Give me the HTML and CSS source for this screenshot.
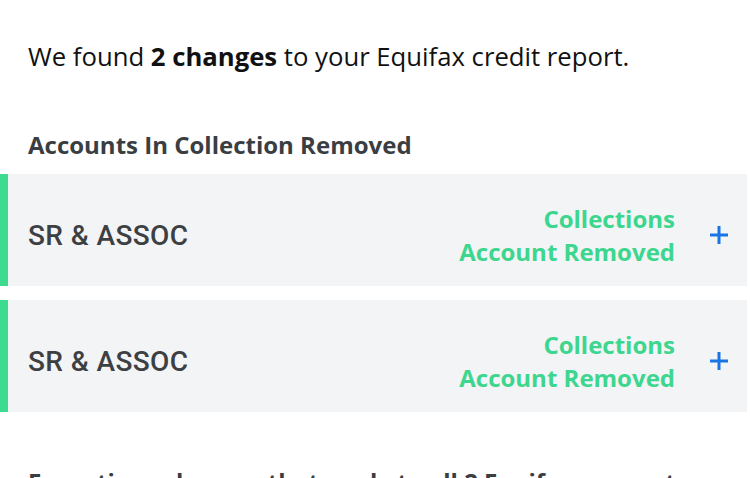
FILE: index.html
```html
<!DOCTYPE html>
<html>
<head>
<meta charset="utf-8">
<link rel="stylesheet" href="styles.css">
</head>
<body>
<main class="page">
  <p class="intro">We found <strong>2 changes</strong> to your Equifax credit report.</p>
  <section class="group">
    <h2 class="group-title">Accounts In Collection Removed</h2>
    <div class="cards">
      <div class="card">
        <span class="card-name">SR &amp; ASSOC</span>
        <span class="card-status">Collections<br>Account Removed</span>
        <svg class="card-plus" width="20" height="20" viewBox="0 0 20 20"><path d="M10 1v18M1 10h18" stroke="#1b74e4" stroke-width="3" fill="none"/></svg>
      </div>
      <div class="card">
        <span class="card-name">SR &amp; ASSOC</span>
        <span class="card-status">Collections<br>Account Removed</span>
        <svg class="card-plus" width="20" height="20" viewBox="0 0 20 20"><path d="M10 1v18M1 10h18" stroke="#1b74e4" stroke-width="3" fill="none"/></svg>
      </div>
    </div>
  </section>
  <section class="group group-next">
    <h2 class="group-title">Exceptions changes that apply to all 2 Equifax accounts</h2>
  </section>
</main>
</body>
</html>
```
FILE: styles.css
```css
html, body {
  margin: 0;
  padding: 0;
  background: #ffffff;
}
body {
  font-family: "Open Sans", "Liberation Sans", sans-serif;
  color: #111111;
  overflow: hidden;
}
.page {
  display: flex;
  flex-direction: column;
}
.intro {
  margin: 41px 0 0 0;
  padding-left: 28px;
  font-size: 25.7px;
  line-height: 32px;
}
.intro strong {
  font-weight: 700;
}
.group {
  display: flex;
  flex-direction: column;
}
.group-title {
  margin: 57px 0 0 0;
  padding-left: 28px;
  font-size: 24px;
  line-height: 30px;
  font-weight: 700;
  color: #3a3e42;
  white-space: nowrap;
}
.cards {
  display: flex;
  flex-direction: column;
  gap: 14px;
  margin-top: 14px;
  margin-right: 3px;
}
.card {
  display: flex;
  align-items: center;
  height: 112px;
  background: #f3f4f6;
  border-left: 8px solid #3ddb90;
  padding: 10px 18px 0 20px;
  box-sizing: border-box;
}
.card-name {
  flex: 1;
  font-family: Roboto, "Liberation Sans", sans-serif;
  font-size: 28px;
  font-weight: 500;
  letter-spacing: 0.4px;
  color: #3d4043;
}
.card-status {
  text-align: right;
  font-size: 24px;
  line-height: 33px;
  font-weight: 700;
  color: #3dd68e;
  margin-right: 34px;
}
.card-plus {
  display: block;
}
.group-next .group-title {
  margin-top: 55px;
}
```
